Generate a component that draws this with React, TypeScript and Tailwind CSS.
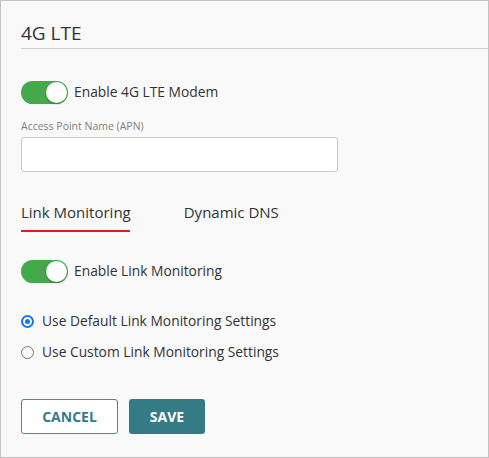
export default function App() {
  const Toggle = ({ label }: { label: string }) => (
    <div className="flex items-center gap-[6px]">
      <div className="relative w-[47px] h-[23px] rounded-full bg-[#45a84b]">
        <div className="absolute right-[1px] top-[1px] w-[21px] h-[21px] rounded-full bg-white shadow-[0_1px_2px_rgba(0,0,0,0.35)]" />
      </div>
      <span className="text-[13.8px] text-[#333]">{label}</span>
    </div>
  );

  const Radio = ({ label, checked }: { label: string; checked?: boolean }) => (
    <div className="flex items-center gap-[8px] h-[20px]">
      {checked ? (
        <div className="w-[13px] h-[13px] rounded-full border-[2px] border-[#1a73e8] flex items-center justify-center">
          <div className="w-[5px] h-[5px] rounded-full bg-[#1a73e8]" />
        </div>
      ) : (
        <div className="w-[13px] h-[13px] rounded-full border border-[#777]" />
      )}
      <span className="text-[13.8px] text-[#333]">{label}</span>
    </div>
  );

  return (
    <div
      className="w-[489px] h-[458px] border border-[#c2c2c2] bg-[#f9f9f9] pl-[20px] flex flex-col"
      style={{ fontFamily: "'Open Sans', 'Noto Sans', sans-serif" }}
    >
      <div className="mt-[18px] border-b border-[#cfcfcf] pb-[1px]">
        <h1 className="text-[19px] leading-[28px] text-[#333]">4G LTE</h1>
      </div>

      <div className="mt-[32px]">
        <Toggle label="Enable 4G LTE Modem" />
      </div>

      <label className="mt-[15px] text-[10.5px] leading-[15px] text-[#7f7f7f]">Access Point Name (APN)</label>
      <input className="mt-[3px] w-[317px] h-[35px] bg-white border border-[#c9c9c9] rounded-[3px]" />

      <div className="mt-[29px] flex items-start gap-[53px]">
        <div className="flex flex-col">
          <span className="text-[15px] leading-[22px] text-[#333]">Link Monitoring</span>
          <div className="mt-[7px] h-[2px] w-[109px] bg-[#e8191f]" />
        </div>
        <span className="text-[15px] leading-[22px] text-[#333]">Dynamic DNS</span>
      </div>

      <div className="mt-[28px]">
        <Toggle label="Enable Link Monitoring" />
      </div>

      <div className="mt-[28px] flex flex-col gap-[11px]">
        <Radio label="Use Default Link Monitoring Settings" checked />
        <Radio label="Use Custom Link Monitoring Settings" />
      </div>

      <div className="mt-[37px] flex gap-[11px]">
        <button className="w-[97px] h-[35px] rounded-[3px] border border-[#4b8a95] bg-white text-[14px] font-bold text-[#357b86]">
          CANCEL
        </button>
        <button className="w-[76px] h-[35px] rounded-[3px] bg-[#357b86] text-[14px] font-bold text-white">
          SAVE
        </button>
      </div>
    </div>
  );
}
